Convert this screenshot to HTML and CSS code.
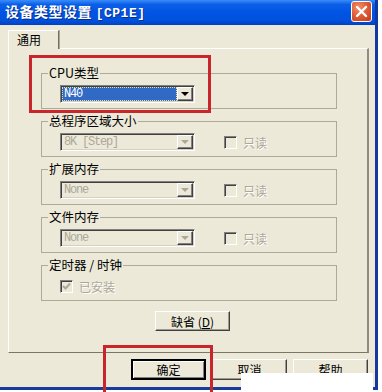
FILE: index.html
```html
<!DOCTYPE html>
<html lang="zh-CN">
<head>
  <meta charset="UTF-8">
  <meta name="viewport" content="width=device-width, initial-scale=1.0">
  <title>设备类型设置</title>
  <link rel="stylesheet" href="styles.css">
</head>
<body>

  <div class="window">
    <div class="titlebar">
      <span class="title">设备类型设置 <span class="title-model">[CP1E]</span></span>
      <span class="close-btn">
        <svg width="13" height="13" viewBox="0 0 13 13">
          <path d="M2 2 L11 11 M11 2 L2 11" stroke="#fff" stroke-width="2.4" stroke-linecap="round"/>
        </svg>
      </span>
    </div>

    <div class="client">
      <div class="tabs">
        <div class="tab">通用</div>
      </div>

      <div class="pane">
        <fieldset class="group">
          <legend>CPU类型</legend>
          <div class="row">
            <div class="combo">
              <span class="combo-text selected">N40</span>
              <span class="drop"><span class="arrow"></span></span>
            </div>
          </div>
        </fieldset>

        <fieldset class="group">
          <legend>总程序区域大小</legend>
          <div class="row">
            <div class="combo disabled">
              <span class="combo-text">8K [Step]</span>
              <span class="drop"><span class="arrow"></span></span>
            </div>
            <span class="check"></span>
            <span class="check-label">只读</span>
          </div>
        </fieldset>

        <fieldset class="group">
          <legend>扩展内存</legend>
          <div class="row">
            <div class="combo disabled">
              <span class="combo-text">None</span>
              <span class="drop"><span class="arrow"></span></span>
            </div>
            <span class="check"></span>
            <span class="check-label">只读</span>
          </div>
        </fieldset>

        <fieldset class="group">
          <legend>文件内存</legend>
          <div class="row">
            <div class="combo disabled">
              <span class="combo-text">None</span>
              <span class="drop"><span class="arrow"></span></span>
            </div>
            <span class="check"></span>
            <span class="check-label">只读</span>
          </div>
        </fieldset>

        <fieldset class="group">
          <legend>定时器 / 时钟</legend>
          <div class="row">
            <span class="check checked">
              <svg width="9" height="9" viewBox="0 0 9 9">
                <path d="M1 4 L3.5 6.5 L8 1.5" stroke="#ACA899" stroke-width="2" fill="none"/>
              </svg>
            </span>
            <span class="check-label">已安装</span>
          </div>
        </fieldset>

        <button class="btn btn-reset">缺省 (<u>D</u>)</button>
      </div>

      <div class="actions">
        <button class="btn btn-default">确定</button>
        <button class="btn">取消</button>
        <button class="btn">帮助</button>
      </div>
    </div>
  </div>

  <div class="mark mark-cpu"></div>
  <div class="mark mark-ok"></div>
  <div class="cover"></div>

</body>
</html>
```

FILE: styles.css
```css
html, body {
  margin: 0;
  height: 100%;
  overflow: hidden;
}

body {
  background-color: #fff;
  font-family: "Noto Sans CJK SC", "Liberation Sans", sans-serif;
  font-size: 12px;
  color: #000;
}

.window {
  width: 378px;
  height: 390px;
  box-sizing: border-box;
  background-color: #ECE9D8;
  border-right: 3px solid #123A9E;
  border-bottom: 3px solid #163C9C;
  display: flex;
  flex-direction: column;
}

.titlebar {
  height: 25px;
  flex-shrink: 0;
  display: flex;
  align-items: center;
  justify-content: space-between;
  padding: 0 3px 0 5px;
  background: linear-gradient(#3B8CFA 0%, #0B5FE6 18%, #0054E3 50%, #0052DC 82%, #0041C4 100%);
}

.title {
  color: #fff;
  font-size: 14px;
  font-weight: bold;
  letter-spacing: 0.5px;
  line-height: 25px;
  text-shadow: 1px 1px 0 #0A2E8C;
}

.title-model {
  font-family: "Liberation Mono", monospace;
  font-size: 13px;
  letter-spacing: 0.5px;
}

.close-btn {
  width: 19px;
  height: 19px;
  border: 1px solid #fff;
  border-radius: 3px;
  background: radial-gradient(circle at 35% 30%, #F0906C 0%, #DD5B34 50%, #C13C17 100%);
  display: flex;
  align-items: center;
  justify-content: center;
  margin-top: -2px;
}

.client {
  flex: 1;
  display: flex;
  flex-direction: column;
  padding: 5px 6px 0 8px;
}

.tabs {
  display: flex;
}

.tab {
  position: relative;
  z-index: 1;
  width: 51px;
  height: 19px;
  box-sizing: border-box;
  margin-bottom: -1px;
  padding-left: 8px;
  line-height: 18px;
  background-color: #ECE9D8;
  border-top: 1px solid #fff;
  border-left: 1px solid #fff;
  border-right: 1px solid #716F64;
  box-shadow: 1px 0 0 #A7A69A;
}

.pane {
  height: 305px;
  box-sizing: border-box;
  display: flex;
  flex-direction: column;
  gap: 5px;
  padding: 17px 0 0 32px;
  border-top: 1px solid #fff;
  border-left: 1px solid #fff;
  border-right: 2px solid #8E8C80;
  border-bottom: 1px solid #7A7668;
}

.group {
  width: 296px;
  box-sizing: border-box;
  margin: 0;
  padding: 5px 0 5px 18px;
  min-width: 0;
  border: 1px solid #ADAA9C;
}

.group legend {
  padding: 0 1px;
  margin-left: -12px;
  line-height: 14px;
  height: 14px;
  font-size: 12.5px;
}

.row {
  height: 18px;
  display: flex;
  align-items: center;
}

.combo {
  width: 135px;
  height: 18px;
  box-sizing: border-box;
  display: flex;
  border-style: solid;
  border-width: 1px;
  border-color: #808080 #fff #fff #808080;
  box-shadow: inset 1px 1px 0 #404040, inset -1px -1px 0 #D4D0C8;
  padding: 1px;
  background-color: #fff;
}

.combo.disabled {
  background-color: #ECE9D8;
}

.combo-text {
  flex: 1;
  font-family: "Liberation Mono", monospace;
  font-size: 12px;
  letter-spacing: -1.2px;
  line-height: 14px;
  padding-left: 2px;
  white-space: nowrap;
}

.combo-text.selected {
  background-color: #316AC5;
  color: #fff;
  outline: 1px dotted #E8E0A0;
  outline-offset: -1px;
}

.combo.disabled .combo-text {
  color: #ACA899;
}

.drop {
  width: 16px;
  box-sizing: border-box;
  display: flex;
  align-items: center;
  justify-content: center;
  background-color: #ECE9D8;
  border-style: solid;
  border-width: 1px;
  border-color: #fff #404040 #404040 #fff;
  box-shadow: inset -1px -1px 0 #808080;
}

.arrow {
  width: 0;
  height: 0;
  border-left: 4px solid transparent;
  border-right: 4px solid transparent;
  border-top: 4px solid #000;
}

.combo.disabled .arrow {
  border-top-color: #ACA899;
}

.check {
  width: 13px;
  height: 13px;
  box-sizing: border-box;
  margin-left: 29px;
  display: flex;
  align-items: center;
  justify-content: center;
  border-style: solid;
  border-width: 1px;
  border-color: #808080 #fff #fff #808080;
  box-shadow: inset 1px 1px 0 #404040;
  background-color: #ECE9D8;
}

.check.checked {
  margin-left: 0;
}

.check-label {
  margin-left: 6px;
  color: #ACA899;
  text-shadow: 1px 1px 0 #fff;
}

.btn {
  width: 75px;
  height: 21px;
  box-sizing: border-box;
  padding: 0;
  font-family: "Noto Sans CJK SC", "Liberation Sans", sans-serif;
  font-size: 12px;
  color: #000;
  background-color: #ECE9D8;
  border-style: solid;
  border-width: 1px;
  border-color: #fff #404040 #404040 #fff;
  box-shadow: inset -1px -1px 0 #9D9B8F;
}

.btn-reset {
  height: 20px;
  margin-top: 5px;
  margin-left: 114px;
}

.btn-default {
  border: 2px solid #000;
  box-shadow: inset 1px 1px 0 #fff, inset -1px -1px 0 #808080;
}

.actions {
  display: flex;
  justify-content: flex-end;
  gap: 6px;
  margin-top: 6px;
  padding-right: 1px;
}

.mark {
  position: absolute;
  box-sizing: border-box;
  border: 3px solid #C9262C;
}

.mark-cpu {
  left: 29px;
  top: 55px;
  width: 182px;
  height: 58px;
}

.mark-ok {
  left: 103px;
  top: 345px;
  width: 110px;
  height: 50px;
  border-bottom: none;
}

.cover {
  position: absolute;
  left: 241px;
  top: 373px;
  width: 132px;
  height: 19px;
  background-color: #fff;
}
```
